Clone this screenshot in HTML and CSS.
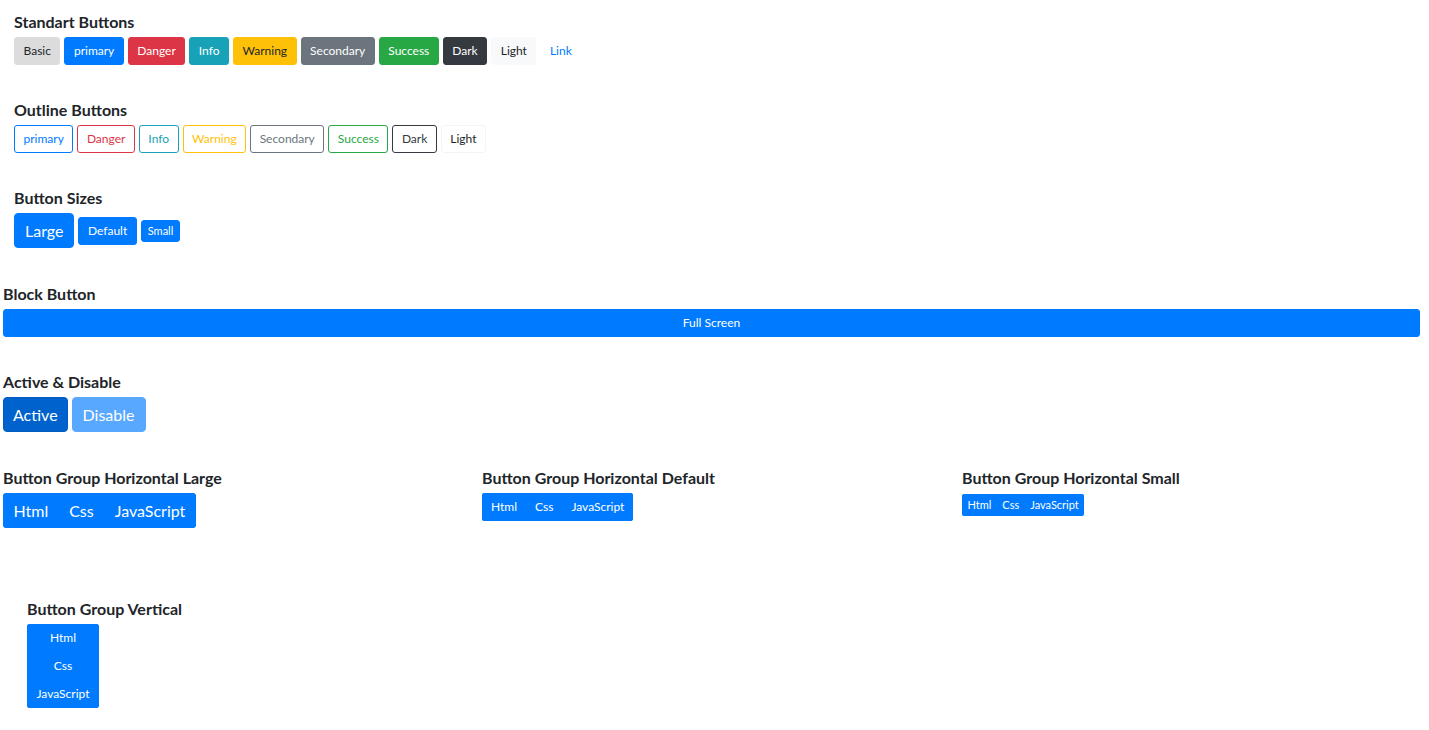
FILE: index.html
```html
<!DOCTYPE html>
<html>
<head>
<meta charset="utf-8">
<link rel="stylesheet" href="styles.css">
</head>
<body>
<section class="sec indent">
  <h5 class="title">Standart Buttons</h5>
  <div class="row">
    <button class="btn basic">Basic</button>
    <button class="btn primary">primary</button>
    <button class="btn danger">Danger</button>
    <button class="btn info">Info</button>
    <button class="btn warning">Warning</button>
    <button class="btn secondary">Secondary</button>
    <button class="btn success">Success</button>
    <button class="btn dark">Dark</button>
    <button class="btn light">Light</button>
    <button class="btn link">Link</button>
  </div>
</section>
<section class="sec indent">
  <h5 class="title">Outline Buttons</h5>
  <div class="row">
    <button class="btn o-primary">primary</button>
    <button class="btn o-danger">Danger</button>
    <button class="btn o-info">Info</button>
    <button class="btn o-warning">Warning</button>
    <button class="btn o-secondary">Secondary</button>
    <button class="btn o-success">Success</button>
    <button class="btn o-dark">Dark</button>
    <button class="btn o-light">Light</button>
  </div>
</section>
<section class="sec indent wide-gap">
  <h5 class="title">Button Sizes</h5>
  <div class="row centered">
    <button class="btn primary lg">Large</button>
    <button class="btn primary">Default</button>
    <button class="btn primary sm">Small</button>
  </div>
</section>
<section class="sec flush">
  <h5 class="title">Block Button</h5>
  <button class="btn primary block">Full Screen</button>
</section>
<section class="sec flush wide-gap">
  <h5 class="title">Active &amp; Disable</h5>
  <div class="row">
    <button class="btn primary lg active">Active</button>
    <button class="btn primary lg disabled">Disable</button>
  </div>
</section>
<section class="groups flush">
  <div class="col">
    <h5 class="title">Button Group Horizontal Large</h5>
    <div class="group lg-group">
      <button class="gbtn">Html</button><button class="gbtn">Css</button><button class="gbtn">JavaScript</button>
    </div>
  </div>
  <div class="col">
    <h5 class="title">Button Group Horizontal Default</h5>
    <div class="group md-group">
      <button class="gbtn">Html</button><button class="gbtn">Css</button><button class="gbtn">JavaScript</button>
    </div>
  </div>
  <div class="col">
    <h5 class="title">Button Group Horizontal Small</h5>
    <div class="group sm-group">
      <button class="gbtn">Html</button><button class="gbtn">Css</button><button class="gbtn">JavaScript</button>
    </div>
  </div>
</section>
<section class="vsec">
  <h5 class="title">Button Group Vertical</h5>
  <div class="vgroup">
    <button class="gbtn">Html</button>
    <button class="gbtn">Css</button>
    <button class="gbtn">JavaScript</button>
  </div>
</section>
</body>
</html>
```
FILE: styles.css
```css
* { box-sizing: border-box; }
body {
  margin: 0;
  padding-top: 12px;
  font-family: "Lato", "Noto Sans", sans-serif;
  color: #212529;
  background: #fff;
}
.sec { margin-bottom: 35px; }
.sec.wide-gap { margin-bottom: 36px; }
.indent { padding-left: 14px; }
.flush { padding-left: 3px; padding-right: 9px; }
.title {
  margin: 0 0 6px 0;
  font-size: 16px;
  line-height: 19px;
  font-weight: 700;
  color: #212529;
}
.row { display: flex; gap: 4px; align-items: flex-start; }
.row.centered { align-items: center; }
.btn {
  font-family: inherit;
  font-size: 12px;
  line-height: 18px;
  padding: 4px 8.5px;
  border: 1px solid transparent;
  border-radius: 3px;
  background: transparent;
  color: #fff;
  cursor: pointer;
}
.basic { background: #dcdcdc; color: #212529; border-color: #dcdcdc; }
.primary { background: #007bff; border-color: #007bff; }
.danger { background: #dc3545; border-color: #dc3545; }
.info { background: #17a2b8; border-color: #17a2b8; }
.warning { background: #ffc107; border-color: #ffc107; color: #212529; }
.secondary { background: #6c757d; border-color: #6c757d; }
.success { background: #28a745; border-color: #28a745; }
.dark { background: #343a40; border-color: #343a40; }
.light { background: #f8f9fa; border-color: #f8f9fa; color: #212529; }
.link { color: #007bff; }

.o-primary { border-color: #007bff; color: #007bff; }
.o-danger { border-color: #dc3545; color: #dc3545; }
.o-info { border-color: #17a2b8; color: #17a2b8; }
.o-warning { border-color: #ffc107; color: #ffc107; }
.o-secondary { border-color: #6c757d; color: #6c757d; }
.o-success { border-color: #28a745; color: #28a745; }
.o-dark { border-color: #343a40; color: #343a40; }
.o-light { border-color: #f3f4f5; color: #212529; }

.lg { font-size: 16px; line-height: 23px; padding: 5px 10px; border-radius: 4px; }
.btn.sm { font-size: 11px; line-height: 16px; padding: 2px 6px; border-radius: 3px; }
.active { background: #0062cc; border-color: #005cbf; padding: 5px 9px; }
.disabled { opacity: .65; cursor: default; }
.block { display: block; width: 100%; }

.groups {
  display: grid;
  grid-template-columns: 479px 480px 1fr;
  margin-bottom: 71px;
}
.group {
  display: inline-flex;
  background: #007bff;
  border-radius: 3px;
  overflow: hidden;
}
.gbtn {
  font-family: inherit;
  background: #007bff;
  color: #fff;
  border: 1px solid #007bff;
  cursor: pointer;
}
.lg-group .gbtn { font-size: 16px; line-height: 23px; padding: 5px 9.5px; }
.lg-group { border-radius: 4px; }
.md-group .gbtn { font-size: 12px; line-height: 18px; padding: 4px 8px; }
.sm-group .gbtn { font-size: 11px; line-height: 16px; padding: 2px 4.5px; }

.vsec { padding-left: 27px; }
.vgroup {
  display: inline-flex;
  flex-direction: column;
  width: 72px;
  border-radius: 3px;
  overflow: hidden;
}
.vgroup .gbtn { font-size: 12px; line-height: 18px; padding: 4px 6px; height: 28px; }
```
